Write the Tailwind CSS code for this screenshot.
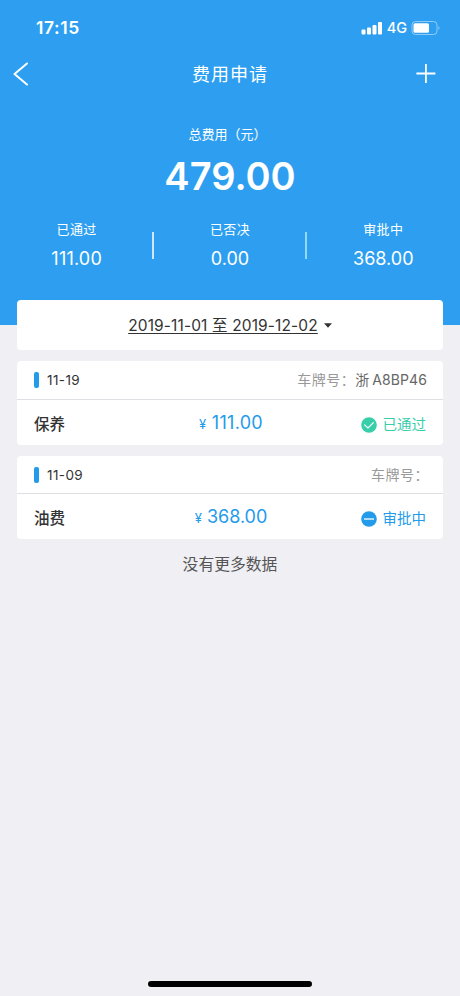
<!DOCTYPE html>
<html lang="zh-CN">
<head>
    <meta charset="UTF-8">
    <meta name="viewport" content="width=device-width, initial-scale=1.0">
    <title>费用申请</title>
    <script src="https://cdn.jsdelivr.net/npm/@tailwindcss/browser@4"></script>
    <style>
        body {
            font-family: 'Inter', 'Noto Sans CJK SC', sans-serif;
            background-color: #efeff4;
        }
    </style>
</head>
<body class="h-[996px] overflow-hidden flex flex-col text-[#333]">
    <header class="h-[325px] shrink-0 bg-[#2e9ff0] text-white">
        <!-- Status bar -->
        <div class="h-[50px] pt-[6px] pl-9 pr-[19px] flex items-center justify-between">
            <span class="text-[17.5px] leading-5 font-semibold tracking-[0.6px]">17:15</span>
            <div class="flex items-center gap-1">
                <svg class="w-[22px] h-[14px]" viewBox="0 0 22 14" fill="currentColor">
                    <rect x="0.5" y="8.5" width="4" height="5" rx="1"/>
                    <rect x="6" y="6.5" width="4" height="7" rx="1"/>
                    <rect x="11.5" y="4" width="4" height="9.5" rx="1"/>
                    <rect x="17" y="1" width="4" height="12.5" rx="1"/>
                </svg>
                <span class="text-[14.5px] leading-5 font-medium">4G</span>
                <svg class="w-[30px] h-[14px]" viewBox="0 0 30 14">
                    <rect x="1" y="0.5" width="25" height="13" rx="3.5" fill="none" stroke="#fff" stroke-opacity="0.45"/>
                    <rect x="2.5" y="2.3" width="15.5" height="9.4" rx="1.5" fill="#fff"/>
                    <path d="M27.5 5 Q29.5 7 27.5 9 Z" fill="#fff" fill-opacity="0.5"/>
                </svg>
            </div>
        </div>

        <!-- Title bar -->
        <div class="h-12 px-3 grid grid-cols-3 items-center">
            <svg class="w-[22px] h-6" viewBox="0 0 22 24" fill="none" stroke="currentColor" stroke-width="2">
                <path d="M15 1.5 L2.5 12 L15 22.5" stroke-linecap="round" stroke-linejoin="round"/>
            </svg>
            <h1 class="pt-0.5 text-center text-[18px] leading-6 tracking-[1px]">费用申请</h1>
            <svg class="w-[22px] h-[22px] mr-[11px] justify-self-end" viewBox="0 0 22 22" fill="none" stroke="currentColor" stroke-width="1.8">
                <path d="M1.4 10.5 H20.4 M10.9 1 V20"/>
            </svg>
        </div>

        <!-- Total -->
        <div class="pt-[26px] text-center">
            <p class="pr-[5px] text-[13px] leading-5">总费用（元）</p>
            <p class="mt-2 text-[38px] leading-[48px] font-semibold">479.00</p>
        </div>

        <!-- Totals by status -->
        <div class="mt-[18px] grid grid-cols-3 text-center">
            <div>
                <p class="pt-px text-[13px] leading-5 tracking-[0.4px]">已通过</p>
                <p class="mt-2 text-[18px] leading-6 tracking-[0.2px]">111.00</p>
            </div>
            <div class="relative">
                <span class="absolute left-[-1px] top-[14px] w-[1.5px] h-[27px] bg-white/75"></span>
                <p class="pt-px text-[13px] leading-5 tracking-[0.4px]">已否决</p>
                <p class="mt-2 text-[18px] leading-6">0.00</p>
                <span class="absolute right-0 top-[14px] w-[1.5px] h-[27px] bg-[#8fdcff]"></span>
            </div>
            <div>
                <p class="pt-px text-[13px] leading-5 tracking-[0.4px]">审批中</p>
                <p class="mt-2 text-[18px] leading-6">368.00</p>
            </div>
        </div>
    </header>

    <main class="relative -mt-[25px] px-[17px]">
        <!-- Date range -->
        <div class="h-[50px] rounded bg-white flex items-center justify-center gap-[6px]">
            <span class="pt-0.5 text-[15.5px] leading-5 tracking-[0.13px] underline underline-offset-[2px] decoration-1">2019-11-01 至 2019-12-02</span>
            <svg class="w-[8px] h-[5px]" viewBox="0 0 7 5" preserveAspectRatio="none" fill="currentColor"><path d="M0 0.2 H7 L3.5 4.8 Z"/></svg>
        </div>

        <!-- Passed -->
        <section class="mt-[11px] h-[84px] rounded bg-white">
            <div class="h-[39px] border-b border-[#dfdfe3] pl-[17px] pr-4 flex items-center">
                <span class="w-[5px] h-[16px] rounded-[2px] bg-[#249bea]"></span>
                <span class="ml-2 text-[13.5px] leading-5 tracking-[0.4px]">11-19</span>
                <span class="ml-auto text-[14px] leading-5 tracking-[0.5px] text-[#999]">车牌号：</span>
                <span class="flex gap-[3px] text-[14px] leading-5 text-[#666]"><span>浙</span><span class="tracking-[0.1px]">A8BP46</span></span>
            </div>
            <div class="h-[44px] px-[17px] grid grid-cols-3 items-center">
                <span class="pt-[6px] text-[15.5px] leading-5 font-medium">保养</span>
                <span class="pt-[2px] pl-[2px] text-center text-[18px] leading-5 tracking-[0.3px] text-[#249bea]"><span class="text-[13px]">¥</span> 111.00</span>
                <span class="pt-[6px] flex items-center justify-end gap-[6px] text-[14.5px] leading-5 text-[#37cfaa]">
                    <svg class="w-4 h-4" viewBox="0 0 16 16"><circle cx="8" cy="8" r="7.8" fill="#37cfaa"/><path d="M3.3 7.6 L7 10.9 L12.7 5.4" fill="none" stroke="#fff" stroke-width="1.2"/></svg>
                    已通过
                </span>
            </div>
        </section>

        <!-- In review -->
        <section class="mt-[11px] h-[83px] rounded bg-white">
            <div class="h-[38px] border-b border-[#dfdfe3] pl-[17px] pr-[14px] flex items-center">
                <span class="w-[5px] h-[16px] rounded-[2px] bg-[#249bea]"></span>
                <span class="ml-2 text-[13.5px] leading-5 tracking-[0.4px]">11-09</span>
                <span class="ml-auto text-[14px] leading-5 tracking-[0.5px] text-[#999]">车牌号：</span>
            </div>
            <div class="h-[44px] px-[17px] grid grid-cols-3 items-center">
                <span class="pt-[6px] text-[15.5px] leading-5 font-medium">油费</span>
                <span class="pt-[2px] pl-[2px] text-center text-[18px] leading-5 text-[#249bea]"><span class="text-[13px]">¥</span> 368.00</span>
                <span class="pt-[6px] flex items-center justify-end gap-[6px] text-[14.5px] leading-5 text-[#249bea]">
                    <svg class="w-4 h-4" viewBox="0 0 16 16"><circle cx="8" cy="8" r="7.8" fill="#249bea"/><path d="M3 8 H13" stroke="#fff" stroke-width="1.3"/></svg>
                    审批中
                </span>
            </div>
        </section>

        <p class="mt-4 text-center text-[15.8px] leading-5 text-[#555]">没有更多数据</p>
    </main>

    <!-- Home indicator -->
    <div class="mt-auto mb-[9px] mx-auto w-[164px] h-[6px] rounded-full bg-black"></div>
</body>
</html>
